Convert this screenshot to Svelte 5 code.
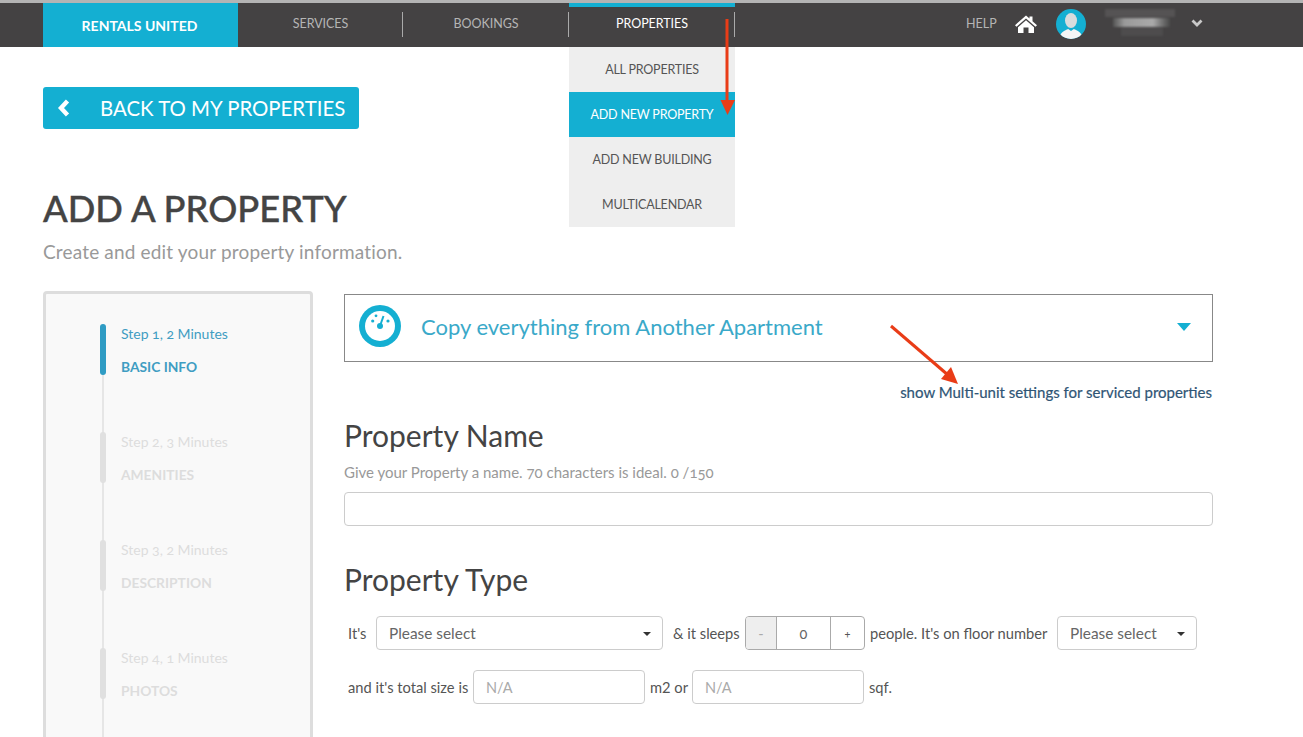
<script>
  const steps = [
    { step: 'Step 1, 2 Minutes', name: 'BASIC INFO', active: true },
    { step: 'Step 2, 3 Minutes', name: 'AMENITIES' },
    { step: 'Step 3, 2 Minutes', name: 'DESCRIPTION' },
    { step: 'Step 4, 1 Minutes', name: 'PHOTOS' }
  ];
  const menu = ['ALL PROPERTIES', 'ADD NEW PROPERTY', 'ADD NEW BUILDING', 'MULTICALENDAR'];
</script>

<div class="page">
  <header class="nav">
    <a class="brand">RENTALS UNITED</a>
    <a class="item services">SERVICES</a>
    <a class="item bookings">BOOKINGS</a>
    <div class="item properties">
      PROPERTIES
      <ul class="menu">
        {#each menu as m, i}
          <li class:on={i === 1}>{m}</li>
        {/each}
      </ul>
    </div>
    <div class="right">
      <span class="help">HELP</span>
      <svg class="home" viewBox="0 0 22 18" width="22" height="18">
        <path fill="#fff" d="M11 0.5 L14.5 3.6 V1.5 H17.5 V6.2 L22 10.2 L20.5 11.8 L11 3.4 L1.5 11.8 L0 10.2 Z" />
        <path fill="#fff" d="M11 5.2 L19 12.2 V18 H13.5 V12.5 H8.5 V18 H3 V12.2 Z" />
      </svg>
      <svg class="avatar" viewBox="0 0 30 30" width="30" height="30">
        <defs><clipPath id="av"><circle cx="15" cy="15" r="15" /></clipPath></defs>
        <circle cx="15" cy="15" r="15" fill="#14afd2" />
        <g clip-path="url(#av)">
          <ellipse cx="15" cy="11.5" rx="6" ry="7.4" fill="#d8dcdd" />
          <path fill="#f4f5f5" d="M3.5 30 C3.5 23 9 21.5 12.2 20 L15 22 L17.8 20 C21 21.5 26.5 23 26.5 30 Z" />
        </g>
      </svg>
      <div class="blurname" aria-hidden="true">
        <i class="b1"></i><i class="b2"></i><i class="b3"></i>
      </div>
      <svg class="chev" viewBox="0 0 12 8" width="12" height="8">
        <path d="M1.5 1.5 L6 6 L10.5 1.5" fill="none" stroke="#c9c9c9" stroke-width="2.8" />
      </svg>
    </div>
  </header>

  <main class="content">
    <a class="back">
      <svg viewBox="0 0 13 18" width="13" height="18"><path d="M10.5 2 L4 9 L10.5 16" fill="none" stroke="#fff" stroke-width="4.4" /></svg>
      <span>BACK TO MY PROPERTIES</span>
    </a>

    <h1>ADD A PROPERTY</h1>
    <p class="sub">Create and edit your property information.</p>

    <div class="cols">
      <aside class="side">
        <div class="steps">
          {#each steps as s}
            <div class="step" class:active={s.active}>
              <div class="s1">{s.step}</div>
              <div class="s2">{s.name}</div>
            </div>
          {/each}
        </div>
      </aside>

      <section class="form">
        <div class="copy">
          <svg class="gauge" viewBox="0 0 42 42" width="42" height="42">
            <circle cx="21" cy="21" r="21" fill="#14afd2" />
            <circle cx="21" cy="21" r="15" fill="#fff" />
            <circle cx="21" cy="21" r="3" fill="#14afd2" />
            <path d="M21 21 L24.5 11" stroke="#14afd2" stroke-width="2" />
            <circle cx="13.7" cy="16" r="1.6" fill="#14afd2" />
            <circle cx="29" cy="16" r="1.6" fill="#14afd2" />
            <circle cx="17" cy="10.8" r="1.4" fill="#14afd2" />
          </svg>
          <span class="copytext">Copy everything from Another Apartment</span>
          <span class="tri"></span>
        </div>
        <div class="linkrow"><a>show Multi-unit settings for serviced properties</a></div>

        <h2 class="h-name">Property Name</h2>
        <p class="hint">Give your Property a name. 70 characters is ideal. 0 /150</p>
        <input class="name" type="text" />

        <h2 class="h-type">Property Type</h2>
        <div class="row r1">
          <span class="lab its">It's</span>
          <div class="sel big">Please select<b></b></div>
          <span class="lab sleeps">&amp; it sleeps</span>
          <div class="num"><span class="minus">-</span><span class="val">0</span><span class="plus">+</span></div>
          <span class="lab people">people. It's on floor number</span>
          <div class="sel small">Please select<b></b></div>
        </div>
        <div class="row r2">
          <span class="lab total">and it's total size is</span>
          <input class="na" placeholder="N/A" />
          <span class="lab m2">m2 or</span>
          <input class="na" placeholder="N/A" />
          <span class="lab sqf">sqf.</span>
        </div>
      </section>
    </div>
  </main>

  <svg class="arrows" viewBox="0 0 1303 737" width="1303" height="737">
    <path d="M727 19 V100" stroke="#e93c17" stroke-width="3" fill="none" />
    <path d="M720.5 100 H735 L727.5 115 Z" fill="#e93c17" />
    <path d="M891 326 L948 375" stroke="#e93c17" stroke-width="3" fill="none" />
    <path d="M951 367 L958 384 L941 379 Z" fill="#e93c17" />
  </svg>
</div>

<style>
  :global(body) { margin: 0; background: #fff; }
  .page {
    position: relative; width: 1303px; height: 737px; overflow: hidden;
    font-family: Lato, "Open Sans", sans-serif; color: #444;
    border-top: 3px solid #b4b4b4; box-sizing: border-box;
  }
  .nav { display: flex; height: 44px; background: #444243; padding-left: 43px; }
  .brand {
    width: 195px; background: #14afd2; color: #fff; font-weight: 700; font-size: 14px;
    display: flex; align-items: center; justify-content: center; padding: 1px 2px 0 0; box-sizing: border-box;
  }
  .item {
    position: relative; display: flex; align-items: center; justify-content: center; color: #b5b5b5;
    font-size: 12.5px; letter-spacing: -0.05px; padding-bottom: 4px; box-sizing: border-box;
  }
  .services { width: 165px; }
  .bookings { width: 166px; }
  .services::after, .bookings::after {
    content: ''; position: absolute; right: 0; top: 9px; height: 25px; width: 1px; background: #aaa;
  }
  .properties { width: 166px; color: #fff; border-top: 4px solid #14afd2; padding-bottom: 8px; }
  .properties::after {
    content: ''; position: absolute; right: 0; top: 5px; height: 25px; width: 1px; background: #aaa;
  }
  .menu {
    position: absolute; left: 0; top: 40px; width: 166px; margin: 0; padding: 0; list-style: none;
    background: #eee; z-index: 2;
  }
  .menu li {
    height: 45px; display: flex; align-items: center; justify-content: center; color: #555; font-size: 12.5px; letter-spacing: -0.2px; box-sizing: border-box;
  }
  .menu li.on { background: #14afd2; color: #fff; }
  .right { display: flex; align-items: center; margin-left: 231px; padding-bottom: 3px; }
  .help { color: #b5b5b5; font-size: 12.5px; width: 31px; }
  .home { margin-left: 18px; }
  .avatar { margin-left: 19px; }
  .blurname { margin-left: 19px; margin-bottom: 1px; width: 70px; height: 28px; position: relative; filter: blur(1px); }
  .blurname i { position: absolute; display: block; }
  .b1 { left: 0; top: 0; width: 70px; height: 8px; background: #555354; }
  .b2 { left: 8px; top: 9px; width: 57px; height: 9px; background: linear-gradient(90deg, #555 0, #9a9a9a 20%, #aaa 70%, #666 90%, #4a4a4a 100%); }
  .b3 { left: 16px; top: 19px; width: 42px; height: 8px; background: #4e4c4d; }
  .chev { margin-left: 16px; margin-bottom: 2px; }

  .content { padding: 40px 0 0 43px; }
  .back {
    width: 316px; height: 42px; background: #14afd2; border-radius: 3px; color: #fff;
    display: flex; align-items: center; box-sizing: border-box; padding-left: 14px; font-size: 20.4px;
  }
  .back span { margin-left: 30px; }
  h1 { margin: 57px 0 0; font-size: 36.3px; line-height: 44px; font-weight: 500; color: #444; -webkit-text-stroke: 0.4px #444; }
  .sub { margin: 10px 0 0; font-size: 19px; line-height: 24px; color: #999; letter-spacing: 0.17px; }
  .cols { display: flex; margin-top: 27px; align-items: flex-start; }
  .side {
    width: 270px; height: 560px; box-sizing: border-box; border: 3px solid #ddd; border-radius: 4px; background: #f9f9f9;
    padding: 30px 0 0 54px; flex: none;
  }
  .steps { position: relative; padding-left: 21px; }
  .steps::before { content: ''; position: absolute; left: 2px; top: 0; height: 600px; width: 2px; background: #e6e6e6; }
  .step { position: relative; height: 108px; color: #ddd; box-sizing: border-box; }
  .step::before {
    content: ''; position: absolute; left: -21px; top: 0; width: 6px; height: 51px; border-radius: 3px; background: #e0e0e0;
  }
  .step.active { color: #3f9dc2; }
  .step.active::before { background: #2f9cc4; }
  .s1 { font-size: 14px; line-height: 20px; font-variant-numeric: oldstyle-nums; }
  .s2 { font-size: 13.8px; line-height: 20px; margin-top: 13px; font-weight: 700; }

  .form { margin-left: 31px; width: 869px; margin-top: 3px; }
  .copy {
    height: 68px; box-sizing: border-box; border: 1px solid #888; display: flex; align-items: center; padding-left: 14px;
  }
  .gauge { margin-bottom: 4px; }
  .copytext { margin-left: 20px; font-size: 22px; color: #3aa9c9; padding-bottom: 4px; }
  .tri {
    margin-left: auto; margin-right: 21px; width: 0; height: 0; border-left: 7px solid transparent; border-right: 7px solid transparent;
    border-top: 8px solid #14afd2; margin-bottom: 2px;
  }
  .linkrow { text-align: right; margin-top: 20px; padding-right: 1px; font-size: 15px; line-height: 20px; color: #2f5575; -webkit-text-stroke: 0.2px #2f5575; }
  h2 { margin: 0; font-weight: 400; font-size: 30px; line-height: 36px; color: #444; }
  .h-name { margin-top: 15px; }
  .hint { margin: 10px 0 0; font-size: 15px; line-height: 18px; color: #999; font-variant-numeric: oldstyle-nums; }
  .name { display: block; width: 100%; height: 34px; box-sizing: border-box; margin-top: 11px; border: 1px solid #ccc; border-radius: 4px; }
  .h-type { margin-top: 35px; }
  .row { display: flex; align-items: center; height: 34px; }
  .r1 { margin-top: 19px; }
  .r2 { margin-top: 20px; }
  .lab { font-size: 14.7px; color: #555; white-space: nowrap; }
  .its { margin-left: 4px; width: 28px; }
  .sel {
    position: relative; height: 34px; box-sizing: border-box; border: 1px solid #ccc; border-radius: 4px; display: flex; align-items: center;
    padding: 0 0 1px 12px; font-size: 15.4px; color: #666;
  }
  .sel b {
    position: absolute; right: 11px; top: 15px; width: 0; height: 0; border-left: 4px solid transparent; border-right: 4px solid transparent; border-top: 4px solid #333;
  }
  .big { width: 287px; }
  .small { width: 140px; margin-left: 9px; }
  .sleeps { margin-left: 10px; width: 68px; }
  .num { display: flex; width: 120px; height: 34px; margin-left: 4px; box-sizing: border-box; border: 1px solid #aaa; border-radius: 4px; font-size: 14.5px; overflow: hidden; font-variant-numeric: oldstyle-nums; }
  .num span { display: flex; align-items: center; justify-content: center; }
  .minus { width: 30px; background: #eee; border-right: 1px solid #aaa; color: #aaa; }
  .val { width: 53px; border-right: 1px solid #aaa; color: #666; }
  .plus { flex: 1; color: #555; font-size: 11px; }
  .people { margin-left: 5px; width: 178px; }
  .total { margin-left: 4px; width: 125px; }
  .na { width: 172px; height: 34px; box-sizing: border-box; border: 1px solid #ccc; border-radius: 4px; padding: 0 12px; font: inherit; font-size: 14.5px; }
  .na::placeholder { color: #aaa; opacity: 1; }
  .m2 { margin-left: 5px; width: 42px; }
  .sqf { margin-left: 5px; }
  .arrows { position: absolute; left: 0; top: -3px; pointer-events: none; z-index: 5; }
</style>
